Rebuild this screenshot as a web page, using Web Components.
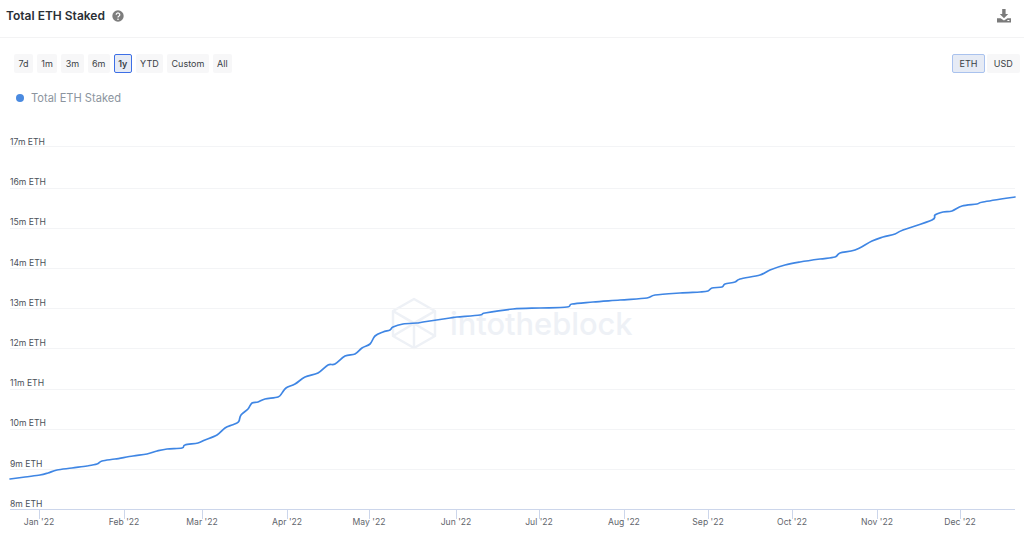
<!DOCTYPE html>
<html>
<head>
<meta charset="utf-8">
<style>
  html, body { margin: 0; background: #fff; }
  body { width: 1024px; height: 534px; overflow: hidden; font-family: Inter, "Liberation Sans", sans-serif; }
</style>
</head>
<body>
<chart-card>
  <card-header slot="header" title="Total ETH Staked"></card-header>
  <button-group slot="left">
    <range-button>7d</range-button>
    <range-button>1m</range-button>
    <range-button>3m</range-button>
    <range-button>6m</range-button>
    <range-button active>1y</range-button>
    <range-button>YTD</range-button>
    <range-button>Custom</range-button>
    <range-button>All</range-button>
  </button-group>
  <button-group slot="right" tight>
    <range-button active soft wide>ETH</range-button>
    <range-button wide>USD</range-button>
  </button-group>
  <chart-legend slot="legend">Total ETH Staked</chart-legend>
  <line-chart slot="chart"></line-chart>
</chart-card>

<script>
class ChartCard extends HTMLElement {
  constructor() {
    super();
    this.attachShadow({ mode: 'open' }).innerHTML = `
      <style>
        :host { display: flex; flex-direction: column; width: 1024px; height: 534px; }
        #toolbar { display: flex; justify-content: space-between; padding: 16px 4px 0 14px; }
      </style>
      <slot name="header"></slot>
      <div id="toolbar"><slot name="left"></slot><slot name="right"></slot></div>
      <slot name="legend"></slot>
      <slot name="chart"></slot>
    `;
  }
}

class CardHeader extends HTMLElement {
  constructor() {
    super();
    this.attachShadow({ mode: 'open' }).innerHTML = `
      <style>
        :host { display: flex; align-items: center; height: 38px; box-sizing: border-box; padding: 0 13px 5px 6px; border-bottom: 1px solid #f3f3f4; }
        h1 { margin: 0; font-size: 12px; font-weight: 600; color: #2a2f36; line-height: 16px; }
        #help { margin-left: 7px; }
        #download { margin-left: auto; }
        svg { display: block; }
      </style>
      <h1></h1>
      <svg id="help" width="12" height="12" viewBox="0 0 12 12">
        <circle cx="6" cy="6" r="5.7" fill="#7d7d7d"/>
        <path d="M4.2 4.7a1.8 1.7 0 1 1 2.8 1.4c-.7.4-1 .7-1 1.4" fill="none" stroke="#fff" stroke-width="1.2"/>
        <circle cx="6" cy="9.2" r=".8" fill="#fff"/>
      </svg>
      <svg id="download" width="14" height="14" viewBox="0 0 14 14">
        <path d="M5.2 0h3.4v5h2.6L7 9.2 2.8 5h2.4z" fill="#7b7b7b"/>
        <path d="M0 9.2h3.6L7 11.6l3.4-2.4H14V13.4H0z" fill="#7b7b7b"/>
        <rect x="10.4" y="11" width="2" height="1" fill="#fff"/>
      </svg>
    `;
    this.shadowRoot.querySelector('h1').textContent = this.getAttribute('title');
    this.removeAttribute('title');
  }
}

class ButtonGroup extends HTMLElement {
  constructor() {
    super();
    this.attachShadow({ mode: 'open' }).innerHTML = `
      <style>
        :host { display: flex; gap: 4px; }
        :host([tight]) { gap: 2px; }
      </style>
      <slot></slot>
    `;
  }
}

class RangeButton extends HTMLElement {
  constructor() {
    super();
    this.attachShadow({ mode: 'open' }).innerHTML = `
      <style>
        :host { display: flex; align-items: center; height: 19px; box-sizing: border-box; padding: 1px 3.4px 0; border-radius: 2px; background: #f7f7f8; color: #3a3f46; font-size: 9px; line-height: 12px; border: 1px solid transparent; }
        :host([active]) { background: #e6ebf5; border-color: #3d6fe6; font-weight: 600; }
        :host([soft]) { border-color: #a9c2ee; font-weight: 400; }
        :host([wide]) { padding: 1px 6.2px 0; }
      </style>
      <slot></slot>
    `;
  }
}

class ChartLegend extends HTMLElement {
  constructor() {
    super();
    this.attachShadow({ mode: 'open' }).innerHTML = `
      <style>
        :host { display: flex; align-items: center; gap: 7px; margin-top: 17px; padding-left: 16px; height: 16px; color: #8b949e; font-size: 11.1px; }
        i { width: 8px; height: 8px; border-radius: 50%; background: #4a8ae0; }
      </style>
      <i></i><slot></slot>
    `;
  }
}

// label text, gridline y, label baseline y, then month ticks and the curve, all read off the reference
const GRID = [
  ['17m ETH', 146, 145], ['16m ETH', 188, 185], ['15m ETH', 228, 225], ['14m ETH', 268, 266], ['13m ETH', 308, 306],
  ['12m ETH', 348, 346], ['11m ETH', 389, 386], ['10m ETH', 429, 426], ['9m ETH', 469, 467], ['8m ETH', 509, 507]
];
const MONTHS = [
  ["Jan '22", 39], ["Feb '22", 124], ["Mar '22", 202], ["Apr '22", 287], ["May '22", 369], ["Jun '22", 456],
  ["Jul '22", 539], ["Aug '22", 624], ["Sep '22", 708], ["Oct '22", 792], ["Nov '22", 877], ["Dec '22", 960]
];
const CURVE = [
  [10,479],[25,477],[40,475],[48,473],[57,470],[72,468],[87,466],[97,464],[102,461],[115,459],[133,456],[147,454],
  [157,451],[167,449],[182,448],[185,445],[198,443],[205,440],[217,435],[225,428],[232,425],[237,423],[239,421],[241,415],
  [248,409],[252,403],[258,402],[265,399],[278,397],[282,393],[286,388],[295,384],[305,377],[318,373],[328,365],[335,364],
  [345,356],[355,354],[362,348],[370,344],[375,336],[383,332],[390,330],[393,327],[403,324],[417,323],[423,322],[450,318],
  [457,317],[480,315],[485,313],[513,309],[540,308],[567,307],[572,304],[593,302],[620,300],[647,298],[655,295],[680,293],
  [700,292],[708,291],[712,288],[722,287],[725,284],[735,282],[740,279],[760,275],[770,270],[785,265],[800,262],[820,259],
  [835,257],[840,253],[855,250],[872,241],[883,237],[895,234],[903,230],[932,220],[935,215],[943,212],[952,211],[962,206],
  [977,204],[983,202],[1015,197]
];

// catmull-rom to bezier so the line doesn't look like straight segments
function smooth(points) {
  let d = `M${points[0][0]} ${points[0][1]}`;
  for (let i = 0; i < points.length - 1; i++) {
    const p0 = points[i - 1] || points[i];
    const p1 = points[i];
    const p2 = points[i + 1];
    const p3 = points[i + 2] || p2;
    const c1x = p1[0] + (p2[0] - p0[0]) / 6;
    const c1y = p1[1] + (p2[1] - p0[1]) / 6;
    const c2x = p2[0] - (p3[0] - p1[0]) / 6;
    const c2y = p2[1] - (p3[1] - p1[1]) / 6;
    d += `C${c1x.toFixed(1)} ${c1y.toFixed(1)} ${c2x.toFixed(1)} ${c2y.toFixed(1)} ${p2[0]} ${p2[1]}`;
  }
  return d;
}

class LineChart extends HTMLElement {
  constructor() {
    super();
    const grid = GRID.slice(0, -1).map(([, y]) => `<path d="M10 ${y + .5}H1015" stroke="#f3f4f6"/>`).join('');
    const labels = GRID.map(([t, , b]) => `<text x="10" y="${b}" class="val">${t}</text>`).join('');
    const ticks = MONTHS.map(([, x]) => `<path d="M${x + .5} 509V519" stroke="#ccd6eb"/>`).join('');
    const months = MONTHS.map(([t, x]) => `<text x="${x}" y="525" text-anchor="middle" class="month">${t}</text>`).join('');
    this.attachShadow({ mode: 'open' }).innerHTML = `
      <style>
        :host { display: block; height: 428px; }
        svg { display: block; font-family: Inter, "Liberation Sans", sans-serif; }
        .val { font-size: 8.6px; fill: #4a5058; }
        .month { font-size: 8.6px; fill: #5f656c; }
        .brand { font-size: 30.8px; font-weight: 500; fill: #eef1f6; }
      </style>
      <svg width="1024" height="428" viewBox="0 106 1024 428">
        <g fill="none" stroke="#eef1f6" stroke-width="2.5" stroke-linejoin="round">
          <path d="M414 299L435 311V336L414 348L393 336V311Z"/>
          <path d="M393 311L414 323L435 311M414 323V348M393 336L435 311M393 311L435 336"/>
        </g>
        <text x="450" y="335" class="brand">intotheblock</text>
        ${grid}
        <path d="M10 509.5H1015" stroke="#ccd6eb"/>
        ${ticks}
        ${labels}
        ${months}
        <path d="${smooth(CURVE)}" fill="none" stroke="#3f86e4" stroke-width="1.7" stroke-linejoin="round" stroke-linecap="round"/>
      </svg>
    `;
  }
}

customElements.define('chart-card', ChartCard);
customElements.define('card-header', CardHeader);
customElements.define('button-group', ButtonGroup);
customElements.define('range-button', RangeButton);
customElements.define('chart-legend', ChartLegend);
customElements.define('line-chart', LineChart);
</script>
</body>
</html>
